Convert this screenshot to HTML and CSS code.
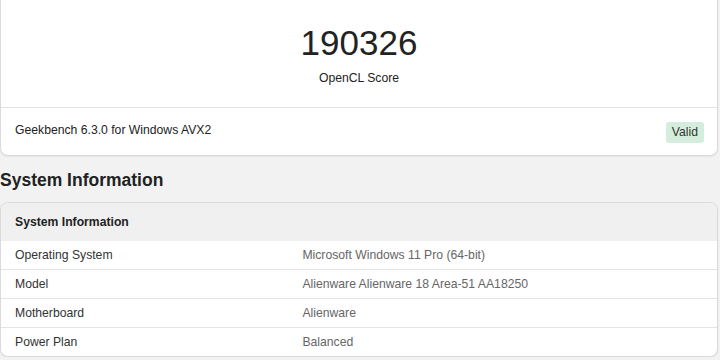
FILE: index.html
```html
<!DOCTYPE html>
<html lang="en">
<head>
    <meta charset="UTF-8">
    <meta name="viewport" content="width=device-width, initial-scale=1.0">
    <title>Geekbench 6 OpenCL Score</title>
    <link rel="stylesheet" href="styles.css">
</head>
<body>
    <div class="page">
        <div class="card score-card">
            <div class="score-main">
                <div class="score">190326</div>
                <div class="score-label">OpenCL Score</div>
            </div>
            <div class="score-footer">
                <span>Geekbench 6.3.0 for Windows AVX2</span>
                <span class="badge">Valid</span>
            </div>
        </div>

        <h2>System Information</h2>

        <div class="card">
            <table class="info">
                <thead>
                    <tr><th colspan="2">System Information</th></tr>
                </thead>
                <tbody>
                    <tr><td class="name">Operating System</td><td class="value">Microsoft Windows 11 Pro (64-bit)</td></tr>
                    <tr><td class="name">Model</td><td class="value">Alienware Alienware 18 Area-51 AA18250</td></tr>
                    <tr><td class="name">Motherboard</td><td class="value">Alienware</td></tr>
                    <tr><td class="name">Power Plan</td><td class="value">Balanced</td></tr>
                </tbody>
            </table>
        </div>
    </div>
</body>
</html>
```

FILE: styles.css
```css
body {
    font-family: "Liberation Sans", Arial, sans-serif;
    margin: 0;
    background: #f2f2f2;
    color: #333;
    font-size: 12.2px;
}
.page { width: 718px; }
.card {
    background: #fff;
    border: 1px solid #dadada;
    border-radius: 8px;
    box-shadow: 0 1px 2px rgba(0,0,0,0.06);
    overflow: hidden;
}
.score-card {
    border-top: none;
    border-radius: 0 0 8px 8px;
}
.score-main {
    text-align: center;
    padding: 22px 0 21px;
    border-bottom: 1px solid #e2e2e2;
}
.score {
    font-size: 35px;
    line-height: 42px;
    color: #222;
}
.score-label {
    margin-top: 6px;
    line-height: 16px;
    color: #222;
}
.score-footer {
    display: flex;
    justify-content: space-between;
    align-items: flex-start;
    padding: 14px 13px 12px 14px;
    line-height: 16px;
    color: #222;
}
.badge {
    background: #d5eddc;
    color: #333;
    border-radius: 3px;
    padding: 3px 6px;
    line-height: 15px;
}
h2 {
    font-size: 17.5px;
    line-height: 22px;
    margin: 13px 0 11px;
    color: #222;
}
.info {
    width: 100%;
    border-collapse: collapse;
}
.info th {
    text-align: left;
    background: #f0f0f0;
    padding: 11px 14px;
    line-height: 16px;
    font-size: 12.2px;
    color: #222;
}
.info td {
    padding: 6px 15px;
    line-height: 16px;
    border-top: 1px solid #e4e4e4;
}
.info tbody tr:first-child td { border-top: none; }
.info .name { width: 40%; padding-left: 14px; color: #333; }
.info .value { color: #666; }
```
